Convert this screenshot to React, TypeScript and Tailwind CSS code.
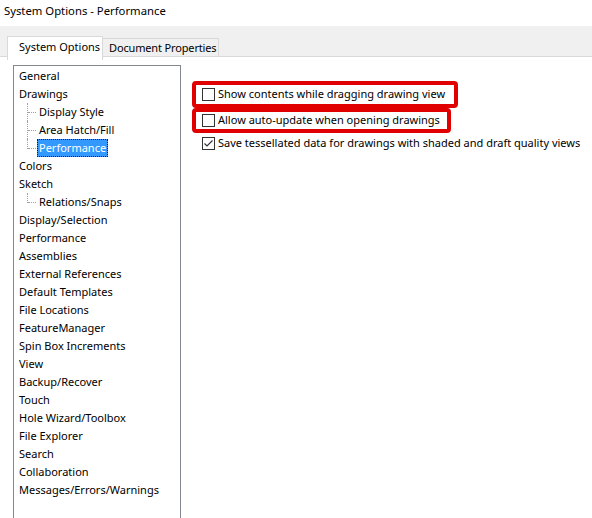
import React from "react";

type TreeItem = { label: string; child?: "mid" | "last"; selected?: boolean };

const treeItems: TreeItem[] = [
  { label: "General" },
  { label: "Drawings" },
  { label: "Display Style", child: "mid" },
  { label: "Area Hatch/Fill", child: "mid" },
  { label: "Performance", child: "last", selected: true },
  { label: "Colors" },
  { label: "Sketch" },
  { label: "Relations/Snaps", child: "last" },
  { label: "Display/Selection" },
  { label: "Performance" },
  { label: "Assemblies" },
  { label: "External References" },
  { label: "Default Templates" },
  { label: "File Locations" },
  { label: "FeatureManager" },
  { label: "Spin Box Increments" },
  { label: "View" },
  { label: "Backup/Recover" },
  { label: "Touch" },
  { label: "Hole Wizard/Toolbox" },
  { label: "File Explorer" },
  { label: "Search" },
  { label: "Collaboration" },
  { label: "Messages/Errors/Warnings" },
];

function TreeRow({ item }: { item: TreeItem }) {
  if (!item.child) {
    return <div className="h-[18px] leading-[18px] pl-[5px] whitespace-nowrap">{item.label}</div>;
  }
  return (
    <div className="relative h-[18px] leading-[18px] pl-[23px] whitespace-nowrap">
      {/* dotted tree connectors */}
      <span className={`absolute left-[13px] top-0 w-0 border-l border-dotted border-[#a0a0a0] ${item.child === "last" ? "h-[10px]" : "h-[18px]"}`} />
      <span className="absolute left-[14px] top-[9px] w-[8px] h-0 border-t border-dotted border-[#a0a0a0]" />
      {item.selected ? (
        <span className="inline-block h-[18px] leading-[16px] px-[1px] bg-[#3399ff] text-white border border-dotted border-[#1a1a1a]">{item.label}</span>
      ) : (
        <span className="px-[2px]">{item.label}</span>
      )}
    </div>
  );
}

function CheckBox({ checked }: { checked?: boolean }) {
  return (
    <span className="w-[13px] h-[13px] shrink-0 border border-[#333333] bg-white flex items-center justify-center">
      {checked && (
        <svg width="11" height="11" viewBox="0 0 11 11">
          <path d="M1.5 5.5 L4 8 L9.5 2.5" fill="none" stroke="#333333" strokeWidth="1.2" />
        </svg>
      )}
    </span>
  );
}

export default function App() {
  return (
    <div className="w-[592px] h-[518px] overflow-hidden bg-white text-[11px] text-black font-['Noto_Sans',sans-serif] flex flex-col">
      {/* Title bar */}
      <div className="h-[26px] shrink-0 bg-white pl-[4px] leading-[22px] text-[11.3px] whitespace-nowrap">System Options - Performance</div>

      {/* Tab strip */}
      <div className="h-[31px] shrink-0 bg-[#f0f0f0] flex items-end relative whitespace-nowrap">
        <div className="w-[7px] border-b border-[#d9d9d9] h-px" />
        <div className="w-[96px] h-[24px] bg-white border border-b-0 border-[#d9d9d9] pl-[11px] leading-[20px] relative z-10 -mb-[3px] self-end">
          System Options
        </div>
        <div className="w-[116px] h-[19px] bg-[#f0f0f0] border border-l-0 border-[#d9d9d9] pl-[6px] leading-[17px] tracking-[-0.15px]">
          Document Properties
        </div>
        <div className="flex-1 border-b border-[#d9d9d9] h-px" />
      </div>

      {/* Tab page */}
      <div className="flex-1 flex bg-white pt-[8px] pl-[13px]">
        <div className="w-[168px] h-[600px] shrink-0 border border-[#828790] bg-white pt-px">
          {treeItems.map((item, i) => (
            <TreeRow key={i} item={item} />
          ))}
        </div>

        <div className="flex-1 pl-[11px] pt-[16px] whitespace-nowrap">
          <div className="w-[266px] h-[27px] border-4 border-[#e00000] rounded-[4px] flex items-center pl-[6px] gap-[3px]">
            <CheckBox />
            <span>Show contents while dragging drawing view</span>
          </div>
          <div className="w-[259px] h-[25px] border-4 border-[#e00000] rounded-[4px] flex items-center pl-[6px] gap-[3px]">
            <CheckBox />
            <span>Allow auto-update when opening drawings</span>
          </div>
          <div className="h-[18px] mt-[1px] flex items-center pl-[10px] gap-[3px]">
            <CheckBox checked />
            <span>Save tessellated data for drawings with shaded and draft quality views</span>
          </div>
        </div>
      </div>
    </div>
  );
}
